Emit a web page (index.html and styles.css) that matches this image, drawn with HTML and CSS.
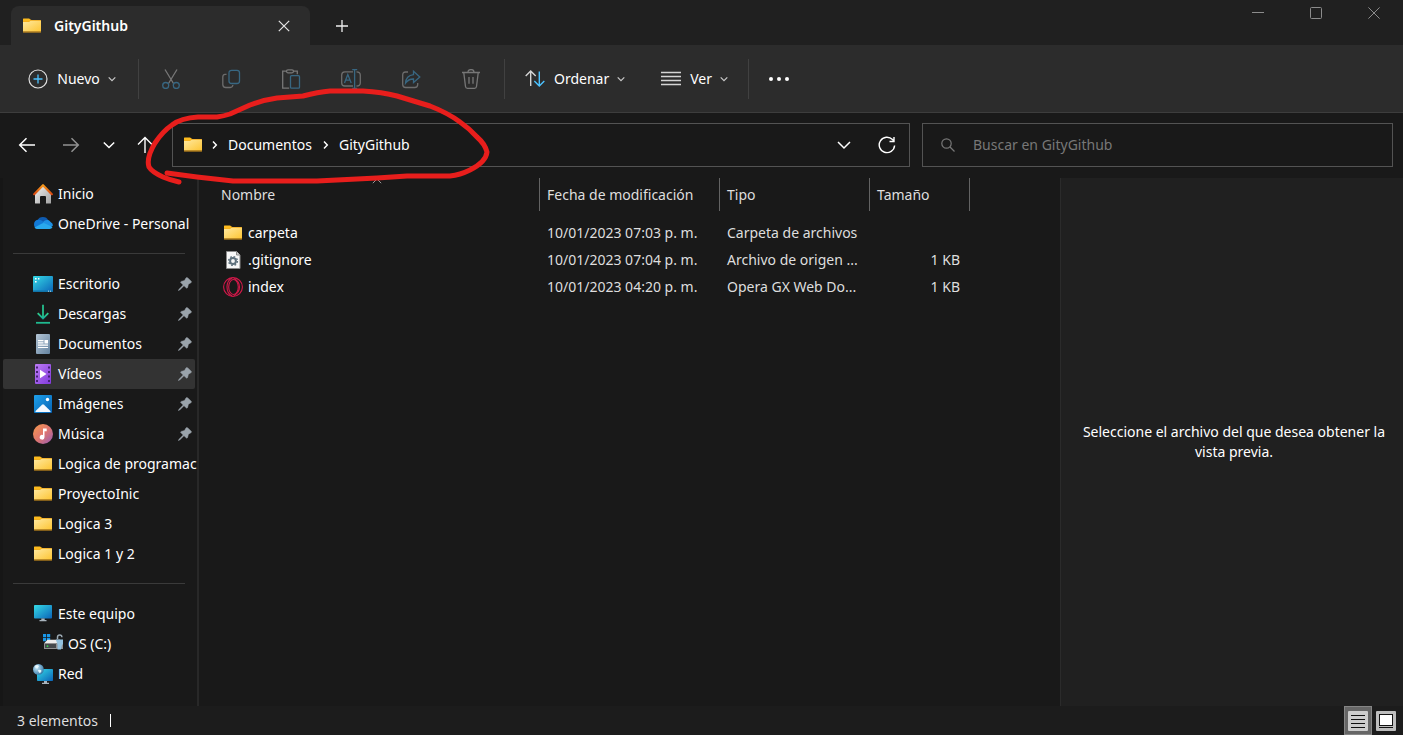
FILE: index.html
```html
<!DOCTYPE html>
<html lang="es">
<head>
<meta charset="utf-8">
<meta name="viewport" content="width=device-width, initial-scale=1">
<title>GityGithub</title>
<link rel="stylesheet" href="styles.css">
</head>
<body>
<svg class="sprite" width="0" height="0" aria-hidden="true">
  <defs>
    <linearGradient id="g-folder" x1="0" y1="0" x2="1" y2="1"><stop offset="0" stop-color="#ffe9a0"/><stop offset="1" stop-color="#fdc534"/></linearGradient>
    <linearGradient id="g-screen" x1="0" y1="0" x2="1" y2="1"><stop offset="0" stop-color="#35dbe6"/><stop offset="1" stop-color="#0b63b8"/></linearGradient>
    <linearGradient id="g-house" x1="0" y1="0" x2="1" y2="1"><stop offset="0" stop-color="#f2f2f2"/><stop offset="1" stop-color="#a2a2a2"/></linearGradient>
    <linearGradient id="g-roof" x1="0" y1="0" x2="0" y2="1"><stop offset="0" stop-color="#f79a1c"/><stop offset="1" stop-color="#d9480f"/></linearGradient>
    <linearGradient id="g-down" x1="0" y1="0" x2="0" y2="1"><stop offset="0" stop-color="#2fcf8a"/><stop offset="1" stop-color="#14a59a"/></linearGradient>
    <linearGradient id="g-doc" x1="0" y1="0" x2="1" y2="1"><stop offset="0" stop-color="#b4c6d6"/><stop offset="1" stop-color="#6483a0"/></linearGradient>
    <linearGradient id="g-video" x1="0" y1="0" x2="1" y2="1"><stop offset="0" stop-color="#bd7cf5"/><stop offset="1" stop-color="#8039da"/></linearGradient>
    <linearGradient id="g-image" x1="0" y1="0" x2="1" y2="1"><stop offset="0" stop-color="#1ea0ea"/><stop offset="1" stop-color="#0563b5"/></linearGradient>
    <linearGradient id="g-music" x1="0" y1="0" x2="1" y2="1"><stop offset="0" stop-color="#f59a4c"/><stop offset=".5" stop-color="#e0766e"/><stop offset="1" stop-color="#925bb8"/></linearGradient>
    <radialGradient id="g-globe" cx=".35" cy=".35" r=".7"><stop offset="0" stop-color="#c6e8f7"/><stop offset="1" stop-color="#3679a8"/></radialGradient>
  </defs>
  <symbol id="folder" viewBox="0 0 20 20"><path d="M1 3.500q0-.5.500-.5h5.700q.4 0 .7.300L9.500 4H18.500q.5 0 .5.500V9H1z" fill="#f0a81a"/><path d="M1 3q0-.5.500-.5h5.700l1.300 1.500L7 5.500H1z" fill="#fdbb1e"/><path d="M1 6h6l1.700-1.300H19V15.500H1z" fill="url(#g-folder)"/><path d="M1 15.500h18v.4q0 .6-.6.600H1.600q-.6 0-.6-.6z" fill="#eba41c"/></symbol>
  <symbol id="home" viewBox="0 0 20 20"><path d="M2 9.500 10 2l8 7.500V19q0 .6-.6.600H13V13q0-1-1-1H8q-1 0-1 1v6.600H2.600Q2 19.600 2 19z" fill="url(#g-house)"/><path d="M1.200 10.200 10 1.200l8.800 9" fill="none" stroke="url(#g-roof)" stroke-width="2.200" stroke-linecap="round" stroke-linejoin="round"/></symbol>
  <symbol id="cloud" viewBox="0 0 20 20"><path d="M4.500 6.500A5.800 5.500 0 0 1 15.300 6.500L11 11z" fill="#0f5bb0"/><path d="M4.500 14.900A4.800 4.700 0 0 1 4.800 5.800q2-.4 3.700.6l6.500 4.600-4 4z" fill="#1279d6"/><path d="M10 8q2-2.600 5.100-2 1.500.4 2.500 2Q20 9 20 11.500l-3 2-7-4z" fill="#1e90e4"/><path d="M1.500 13.500 9 9.500q1.500-.8 3 0l7.600 3.600q-1 2-3 2H4.600q-2 0-3.100-1.600z" fill="#29a9ee"/></symbol>
  <symbol id="desktop" viewBox="0 0 20 20"><rect x="0" y="2" width="20" height="16" rx="1" fill="url(#g-screen)"/><path d="M2 4h1.600v1.600H2zM2 7h1.600v1.600H2zM5 4h1.400v1.400H5z" fill="#fff"/><path d="M0 16.500h20v.6q0 .9-.9.900H.9Q0 18 0 17.100z" fill="#1173a8"/><path d="M15 16.800h1v.8h-1zM17 16.800h1v.8h-1z" fill="#fff"/></symbol>
  <symbol id="download" viewBox="0 0 20 20"><path d="M4.700 9.200 10 14.500l5.300-5.300" fill="none" stroke="url(#g-down)" stroke-width="1.800"/><path d="M10 .8v13" stroke="#25c08e" stroke-width="1.800"/><path d="M3 18.800h14" stroke="#1fb98f" stroke-width="1.800"/></symbol>
  <symbol id="document" viewBox="0 0 20 20"><rect x="3" y="0" width="14" height="20" rx="1" fill="url(#g-doc)"/><path d="M5 6h5.500v1.200H5zM5 8.300h5.500v1.200H5zM5 10.600h10v1.200H5zM5 12.900h10v1.200H5zM11.500 6H15v3.500h-3.500z" fill="#fff"/></symbol>
  <symbol id="video" viewBox="0 0 20 20"><rect x="2" y="0" width="16" height="20" rx="1" fill="url(#g-video)"/><path d="M3 2.500h2v2H3zM3 7h2v2H3zM3 11.500h2v2H3zM3 16h2v2H3zM15 2.500h2v2h-2zM15 7h2v2h-2zM15 11.500h2v2h-2zM15 16h2v2h-2z" fill="#452275"/><path d="M7 5.800v8.400l6.500-4.200z" fill="#fff"/></symbol>
  <symbol id="image" viewBox="0 0 20 20"><rect x="1" y="1" width="18" height="18" rx="1" fill="url(#g-image)"/><path d="M3 18q-1.200 0-.4-.9L9 10.700q1-1 2 0l6.400 6.400q.8.900-.4.900z" fill="#f3f9ff"/><circle cx="14.500" cy="5.500" r="1.700" fill="#fff"/></symbol>
  <symbol id="music" viewBox="0 0 20 20"><circle cx="10" cy="10" r="10" fill="url(#g-music)"/><path d="M10 4.500h3.700v2.700h-2.200v6.100a2.400 2.400 0 1 1-1.500-2.300z" fill="#fff"/></symbol>
  <symbol id="computer" viewBox="0 0 20 20"><rect x="1" y="1" width="18" height="13.500" rx=".8" fill="url(#g-screen)"/><path d="M8.300 14.500h3.400V16h1.800v1.200h-7V16h1.800z" fill="#a9b4bd"/></symbol>
  <symbol id="drive" viewBox="0 0 20 20"><path d="M0 0h3.200v3.200H0zM4 0h3.200v3.200H4zM0 4h3.200v3.200H0zM4 4h3.200v3.200H4z" fill="#1896e8"/><path d="M4.500 5.800H17l3 3.700H1z" fill="#ececec"/><path d="M1 9.500h19V15H1z" fill="#8d9194"/><path d="M1.500 9.500h12v5h-12z" fill="#44484c" stroke="#999" stroke-width=".8"/><circle cx="4.500" cy="12.200" r=".9" fill="#36d64a"/><path d="M14.500 5V3.200a2.200 2.200 0 0 1 4.400 0" fill="none" stroke="#9caab4" stroke-width="1.500"/><path d="M12.800 5.500H20V10l-1 1-1 4.500h-3.500v-5z" fill="#94c2df"/></symbol>
  <symbol id="network" viewBox="0 0 20 20"><rect x="4" y="5" width="16" height="12" rx=".8" fill="url(#g-screen)"/><path d="M11 17h3v1.700h2V20H9v-1.300h2z" fill="#a9b4bd"/><circle cx="5.400" cy="5.400" r="5.400" fill="url(#g-globe)"/><path d="M2 2q2-2 4 0L4.500 4.500 2.500 4zM5 6q3-1 3.500 1L7 9.200 5.600 8z" fill="#e8f7fd"/></symbol>
  <symbol id="pin" viewBox="0 0 14 14"><path d="M8 .900q.9-.9 1.800 0l3.400 3.400q.8.900-.3 1.500L10.400 7.200 9.600 10.400q-.4 1.400-1.500.4L6 8.700 1.700 13l-1.300.600.600-1.300L5.200 8 3 5.800q-1-.9.300-1.400l3.200-.8z" fill="#9aa3ab" stroke="#9aa3ab" stroke-width=".5"/></symbol>
  <symbol id="gearfile" viewBox="0 0 20 20"><path d="M3.500 1.500h10l3.500 3.500v13.500H3.500z" fill="#f7f7f7" stroke="#8b8b8b"/><path d="M13.500 1.500V5H17" fill="#ccc" stroke="#8b8b8b"/><circle cx="10" cy="11" r="2.900" fill="none" stroke="#5f717d" stroke-width="2"/><circle cx="10" cy="11" r="4.400" fill="none" stroke="#5f717d" stroke-width="1.400" stroke-dasharray="1.700 1.755"/></symbol>
  <symbol id="opera" viewBox="0 0 20 20"><g fill="none" stroke="#d3194a" stroke-width="1.100"><circle cx="10" cy="10" r="9.400"/><ellipse cx="10.500" cy="10" rx="4.800" ry="7.500"/><path d="M9 1Q4 3.500 4 10T9 19M11 1.500q5.500 3 5.500 8.500T11 18.500"/></g></symbol>
  <symbol id="chev" viewBox="0 0 8 8"><path d="M.7 2.300 4 5.600l3.300-3.300" fill="none" stroke="#c9c9c9" stroke-width="1.200"/></symbol>
  <symbol id="sep" viewBox="0 0 8 10"><path d="m2 1.500 3.300 3.500L2 8.500" fill="none" stroke="#fff" stroke-width="1.500"/></symbol>
</svg>

<div class="window">
  <header class="titlebar">
    <div class="tab">
      <svg class="icon"><use href="#folder"/></svg>
      <span class="tab-title">GityGithub</span>
      <button class="tab-close" aria-label="Cerrar pestaña"><svg width="12" height="12" viewBox="0 0 12 12"><path d="m.8.8 10.400 10.400M11.200.8.8 11.200" stroke="#e6e6e6" stroke-width="1.200"/></svg></button>
    </div>
    <button class="tab-new" aria-label="Nueva pestaña"><svg width="12" height="12" viewBox="0 0 12 12"><path d="M6 0v12M0 6h12" stroke="#eee" stroke-width="1.300"/></svg></button>
    <div class="win-controls">
      <button aria-label="Minimizar"><svg width="12" height="12" viewBox="0 0 12 12"><path d="M0 5.500h12" stroke="#8c8c8c"/></svg></button>
      <button aria-label="Maximizar"><svg width="12" height="12" viewBox="0 0 12 12"><rect x=".5" y=".5" width="11" height="11" rx="1" fill="none" stroke="#8c8c8c"/></svg></button>
      <button aria-label="Cerrar"><svg width="12" height="12" viewBox="0 0 12 12"><path d="m.4.4 11.200 11.200M11.600.4.4 11.600" stroke="#8c8c8c"/></svg></button>
    </div>
  </header>

  <div class="toolbar" role="toolbar">
    <button class="tool new"><svg class="icon" viewBox="0 0 20 20"><circle cx="10" cy="10" r="9" fill="none" stroke="#dedede" stroke-width="1.200"/><path d="M10 5.500v9M5.500 10h9" stroke="#4cc2ff" stroke-width="1.300"/></svg><span>Nuevo</span><svg class="chev"><use href="#chev"/></svg></button>
    <span class="rule"></span>
    <div class="actions">
      <button disabled aria-label="Cortar"><svg class="icon" viewBox="0 0 20 20" fill="none" stroke-width="1.300"><path d="m4 .5 8.500 14M16 .5 7.500 14.500" stroke="#777"/><circle cx="4.700" cy="16.500" r="3" stroke="#386782"/><circle cx="15.300" cy="16.500" r="3" stroke="#386782"/></svg></button>
      <button disabled aria-label="Copiar"><svg class="icon" viewBox="0 0 20 20" fill="none" stroke-width="1.300"><path d="M5.500 5.300H4Q1.800 5.500 1.800 8v7.500q0 3 3 3h4.500q2.200 0 2.600-2.500" stroke="#6d6d6d"/><rect x="8" y="1.300" width="10.500" height="13.200" rx="2.500" stroke="#386782"/></svg></button>
      <button disabled aria-label="Pegar"><svg class="icon" viewBox="0 0 20 20" fill="none" stroke-width="1.300"><path d="M5.500 2.200H1.700v17h6.500M12.500 2.200h3.800v3" stroke="#777"/><rect x="5.500" y=".8" width="7" height="3" rx="1.500" stroke="#777"/><rect x="9.500" y="6.700" width="9" height="12.500" rx="1" stroke="#386782"/></svg></button>
      <button disabled aria-label="Cambiar nombre"><svg class="icon" viewBox="0 0 20 20" fill="none" stroke-width="1.300"><path d="M12 2.800H3.700Q.7 3 .7 6v8q0 3 3 3H12M15.500 2.800q3.800 0 3.800 3.200v8q0 3-3.800 3" stroke="#6d6d6d"/><path d="m3.500 14 3.300-8.500L10.200 14M4.800 11.200h4.100M13.600 1v18M11.200.7h5M11.200 19.300h5" stroke="#386782"/></svg></button>
      <button disabled aria-label="Compartir"><svg class="icon" viewBox="0 0 20 20" fill="none" stroke-width="1.300"><path d="M7 3H4.500Q1.700 3 1.700 6v9.500q0 3 3 3h9q3 0 3-3V14" stroke="#6d6d6d"/><path d="M12.500 2.200 18.800 8l-6.300 5.600V10q-5-.1-8 4.200.5-7.700 8-8.600z" stroke="#386782"/></svg></button>
      <button disabled aria-label="Eliminar"><svg class="icon" viewBox="0 0 20 20" fill="none" stroke="#777" stroke-width="1.300"><path d="M1 3.500h18M7 3.200q0-2.600 3-2.600t3 2.600M2.800 3.800l1.700 13.700q.2 1.800 2 1.800h7q1.800 0 2-1.800l1.700-13.700M8 8v6.700M12 8v6.700"/></svg></button>
    </div>
    <span class="rule"></span>
    <button class="tool"><svg class="icon" viewBox="0 0 20 20" fill="none" stroke-width="1.400"><path d="M5.700 17V2M.7 7l5-5 5 5" stroke="#d5d5d5"/><path d="M14.300 2.500V17M9.300 12l5 5 5-5" stroke="#4cc2ff"/></svg><span>Ordenar</span><svg class="chev"><use href="#chev"/></svg></button>
    <button class="tool view"><svg class="icon" viewBox="0 0 20 20"><path d="M0 3.500h20M0 7.500h20M0 11.500h20M0 15.500h20" stroke="#d5d5d5" stroke-width="1.300"/></svg><span>Ver</span><svg class="chev"><use href="#chev"/></svg></button>
    <span class="rule"></span>
    <button class="more" aria-label="Ver más"><svg class="icon" viewBox="0 0 20 20" fill="#fff"><circle cx="2" cy="10" r="2"/><circle cx="10" cy="10" r="2"/><circle cx="18" cy="10" r="2"/></svg></button>
  </div>

  <div class="navbar">
    <div class="history">
      <button aria-label="Atrás"><svg width="18" height="18" viewBox="0 0 18 18" fill="none" stroke="#fff" stroke-width="1.500"><path d="M17 9H2M8.500 2.200 1.700 9l6.800 6.800"/></svg></button>
      <button aria-label="Adelante" disabled><svg width="18" height="18" viewBox="0 0 18 18" fill="none" stroke="#929292" stroke-width="1.500"><path d="M1 9h15M9.500 2.200 16.300 9l-6.800 6.800"/></svg></button>
      <button aria-label="Ubicaciones recientes"><svg width="12" height="12" viewBox="0 0 12 12" fill="none" stroke="#fff" stroke-width="1.500"><path d="m.8 3.500 5.200 5 5.200-5"/></svg></button>
      <button aria-label="Subir"><svg width="18" height="18" viewBox="0 0 18 18" fill="none" stroke="#fff" stroke-width="1.400"><path d="M9 17V2M2 8.500l7-7 7 7"/></svg></button>
    </div>
    <div class="fields">
      <nav class="address" aria-label="Ruta">
        <svg class="icon"><use href="#folder"/></svg>
        <svg class="crumb-sep"><use href="#sep"/></svg>
        <a href="#documentos">Documentos</a>
        <svg class="crumb-sep"><use href="#sep"/></svg>
        <a href="#gitygithub">GityGithub</a>
        <button class="history-drop" aria-label="Historial"><svg width="14" height="14" viewBox="0 0 14 14" fill="none" stroke="#fff" stroke-width="1.500"><path d="m1 4 6 6 6-6"/></svg></button>
        <button class="refresh" aria-label="Actualizar"><svg width="18" height="18" viewBox="0 0 18 18" fill="none" stroke="#fff" stroke-width="1.400"><path d="M16.600 9.500A7.700 7.700 0 1 1 14.500 3.600L16 5M16 1v4.500h-4.500"/></svg></button>
      </nav>
      <label class="search">
        <svg width="14" height="14" viewBox="0 0 14 14" fill="none" stroke="#777" stroke-width="1.200"><circle cx="5.500" cy="5.500" r="4.700"/><path d="m9 9 4.500 4.500"/></svg>
        <input type="text" placeholder="Buscar en GityGithub" aria-label="Buscar en GityGithub">
      </label>
    </div>
  </div>

  <div class="content">
    <nav class="sidebar" aria-label="Panel de navegación">
      <ul>
        <li><a href="#"><svg class="icon"><use href="#home"/></svg><span>Inicio</span></a></li>
        <li><a href="#"><svg class="icon"><use href="#cloud"/></svg><span>OneDrive - Personal</span></a></li>
      </ul>
      <hr>
      <ul>
        <li><a href="#"><svg class="icon"><use href="#desktop"/></svg><span>Escritorio</span><svg class="pin"><use href="#pin"/></svg></a></li>
        <li><a href="#"><svg class="icon"><use href="#download"/></svg><span>Descargas</span><svg class="pin"><use href="#pin"/></svg></a></li>
        <li><a href="#"><svg class="icon"><use href="#document"/></svg><span>Documentos</span><svg class="pin"><use href="#pin"/></svg></a></li>
        <li><a href="#" class="selected"><svg class="icon"><use href="#video"/></svg><span>Vídeos</span><svg class="pin"><use href="#pin"/></svg></a></li>
        <li><a href="#"><svg class="icon"><use href="#image"/></svg><span>Imágenes</span><svg class="pin"><use href="#pin"/></svg></a></li>
        <li><a href="#"><svg class="icon"><use href="#music"/></svg><span>Música</span><svg class="pin"><use href="#pin"/></svg></a></li>
        <li><a href="#"><svg class="icon"><use href="#folder"/></svg><span>Logica de programac</span></a></li>
        <li><a href="#"><svg class="icon"><use href="#folder"/></svg><span>ProyectoInic</span></a></li>
        <li><a href="#"><svg class="icon"><use href="#folder"/></svg><span>Logica 3</span></a></li>
        <li><a href="#"><svg class="icon"><use href="#folder"/></svg><span>Logica 1 y 2</span></a></li>
      </ul>
      <hr>
      <ul>
        <li><a href="#"><svg class="icon"><use href="#computer"/></svg><span>Este equipo</span></a></li>
        <li><a href="#" class="nested"><svg class="icon"><use href="#drive"/></svg><span>OS (C:)</span></a></li>
        <li><a href="#"><svg class="icon"><use href="#network"/></svg><span>Red</span></a></li>
      </ul>
    </nav>

    <main class="files">
      <table>
        <colgroup><col class="c-name"><col class="c-date"><col class="c-type"><col class="c-size"></colgroup>
        <thead>
          <tr>
            <th scope="col">Nombre<svg class="sort" width="10" height="6" viewBox="0 0 10 6"><path d="M.8 5.200 5 1l4.200 4.200" fill="none" stroke="#999"/></svg></th>
            <th scope="col">Fecha de modificación</th><th scope="col">Tipo</th><th scope="col">Tamaño</th>
          </tr>
        </thead>
        <tbody>
          <tr><td><div class="name"><svg class="icon"><use href="#folder"/></svg>carpeta</div></td><td>10/01/2023 07:03 p. m.</td><td>Carpeta de archivos</td><td></td></tr>
          <tr><td><div class="name"><svg class="icon"><use href="#gearfile"/></svg>.gitignore</div></td><td>10/01/2023 07:04 p. m.</td><td>Archivo de origen ...</td><td>1 KB</td></tr>
          <tr><td><div class="name"><svg class="icon"><use href="#opera"/></svg>index</div></td><td>10/01/2023 04:20 p. m.</td><td>Opera GX Web Do...</td><td>1 KB</td></tr>
        </tbody>
      </table>
    </main>

    <aside class="preview"><p>Seleccione el archivo del que desea obtener la vista previa.</p></aside>
  </div>

  <footer class="statusbar">
    <span class="count">3 elementos</span>
    <div class="views">
      <button class="active" aria-label="Detalles"><svg width="20" height="20" viewBox="0 0 20 20"><rect width="20" height="20" rx="1" fill="#cdcdcd"/><path d="M3 4.500h14M3 8.500h14M3 12.500h14M3 16.500h14" stroke="#111"/></svg></button>
      <button aria-label="Iconos grandes"><svg width="20" height="20" viewBox="0 0 20 20"><rect width="20" height="20" rx="1" fill="#bdbdbd"/><rect x="3.500" y="3.500" width="13" height="11" fill="#fff" stroke="#111"/><path d="M3 16.500h14" stroke="#111"/></svg></button>
    </div>
  </footer>

  <svg class="marker" width="350" height="104" viewBox="144 84 350 104" aria-hidden="true"><path d="M179 182Q170 180 163 177 152 172 149 167 146 158 155 143 163 131 172 125 181 118 198 117H217Q224 116 230 114L250 105Q263 100 277 98L303 96Q318 92 330 91H363Q382 92 397 96L430 106Q448 113 460 122 470 129 477 137 485 144 487 152 486 162 470 170 460 175 450 176H407L377 178 317 181H233L197 177 167 173"/></svg>
</div>
</body>
</html>
```

FILE: styles.css
```css
* { box-sizing: border-box; }

body {
  margin: 0;
  background: #191919;
  color: #fff;
  font: 14px/20px "Noto Sans", "Open Sans", sans-serif;
}

.sprite { position: absolute; }
svg { display: block; flex: none; }
button { display: flex; align-items: center; justify-content: center; padding: 0; border: 0; background: none; color: inherit; font: inherit; }
a { color: inherit; text-decoration: none; }
.icon { width: 20px; height: 20px; }
.chev { width: 8px; height: 8px; }

.window { position: relative; display: flex; flex-direction: column; min-height: 100vh; }

/* Title bar */
.titlebar { display: flex; align-items: flex-end; height: 45px; padding-left: 11px; background: #202020; }
.tab { display: flex; align-items: center; width: 299px; height: 39px; padding: 0 18px 0 11px; border-radius: 8px 8px 0 0; background: #2c2c2c; }
.tab-title { flex: 1; margin-left: 12px; font-weight: 600; }
.tab-close { width: 16px; height: 20px; }
.tab-new { width: 40px; height: 38px; margin-left: 12px; }
.win-controls { display: flex; align-self: flex-start; margin-left: auto; }
.win-controls button { width: 58px; height: 26px; }

/* Command bar */
.toolbar { display: flex; align-items: center; height: 68px; border-bottom: 1px solid #3d3d3d; background: #2c2c2c; }
.tool { gap: 9px; height: 40px; padding: 0 10px; }
.tool.new { width: 112px; margin: 0 0 0 16px; }
.tool.new + .rule { margin-left: 10px; }
.tool .chev { margin-left: -1px; }
.rule { width: 1px; height: 40px; background: #414141; }
.actions { display: flex; margin: 0 3px 0 2px; }
.actions button { width: 60px; height: 40px; }
.actions + .rule { margin-right: 10px; }
.view { margin: 0 10px 0 16px; }
.more { width: 60px; height: 40px; }

/* Navigation bar */
.navbar { display: flex; align-items: center; height: 65px; padding: 0 10px 2px 0; }
.history { display: flex; width: 172px; padding-left: 7px; }
.history button { width: 40px; height: 40px; }
.history button:nth-child(2) { margin-left: 4px; }
.history button:nth-child(3) { margin-left: -2px; }
.history button:nth-child(4) { margin-left: -4px; }
.fields { display: grid; flex: 1; grid-template-columns: 738fr 471fr; gap: 12px; }
.address, .search { display: flex; align-items: center; height: 44px; border: 1px solid #535353; }
.address { padding: 0 12px 0 10px; }
.crumb-sep { width: 8px; height: 10px; margin: 0 9px 0 8px; }
a + .crumb-sep { margin-left: 10px; }
.history-drop { width: 30px; height: 30px; margin-left: auto; }
.refresh { width: 20px; height: 30px; margin-left: 18px; }
.search { padding: 0 18px; gap: 18px; }
.search input { flex: 1; min-width: 0; padding: 0; border: 0; outline: 0; background: none; color: #fff; font: inherit; }
.search input::placeholder { color: #777; opacity: 1; }

/* Main area */
.content { display: flex; flex: 1; }

.sidebar { width: 199px; padding: 1px 2px 0 0; border-left: 3px solid #161616; border-right: 2px solid #282828; }
.sidebar ul { margin: 0; padding: 0; list-style: none; }
.sidebar a { display: flex; align-items: center; gap: 5px; height: 30px; padding: 0 3px 0 30px; white-space: nowrap; }
.sidebar a.nested { padding-left: 40px; }
.sidebar a.selected { border-radius: 2px; background: #333; }
.sidebar a > span { flex: 1; }
.sidebar hr { height: 1px; margin: 14px 10px 15px; border: 0; background: #3a3a3a; }
.pin { width: 14px; height: 14px; }

.files { flex: 1; min-width: 0; padding-left: 15px; }
.files table { table-layout: fixed; width: 756px; border-collapse: separate; border-spacing: 0; color: #dedede; }
.c-name { width: 326px; }
.c-date { width: 180px; }
.c-type { width: 150px; }
.c-size { width: 100px; }
.files th { position: relative; height: 33px; padding: 0 7px; border-right: 1px solid #636363; font-weight: 400; text-align: left; }
.files tbody::before { content: ""; display: block; height: 8px; }
.files td { height: 27px; padding: 0 7px; white-space: nowrap; }
.files td:nth-child(4) { padding-right: 10px; text-align: right; }
.name { display: flex; align-items: center; gap: 5px; padding-left: 2px; color: #fff; }
.sort { position: absolute; top: 0; left: 50%; margin-left: -5px; }

.preview { display: flex; align-items: center; justify-content: center; width: 343px; padding: 0 10px 0 14px; border-left: 1px solid #2b2b2b; background: #202020; text-align: center; }
.preview p { margin: 0; }

/* Status bar */
.statusbar { display: flex; align-items: center; height: 29px; padding-left: 17px; background: #1c1c1c; color: #dedede; }
.count { display: flex; align-items: center; gap: 12px; }
.count::after { content: ""; width: 1px; height: 13px; background: #fff; }
.views { display: flex; margin-left: auto; padding-right: 3px; }
.views button { width: 28px; height: 29px; }
.views .active { border: 1px solid #858585; background: #666; }

/* Hand-drawn highlight over the path */
.marker { position: absolute; left: 144px; top: 84px; pointer-events: none; }
.marker path { fill: none; stroke: #e81e1c; stroke-width: 5; stroke-linecap: round; stroke-linejoin: round; }
```
